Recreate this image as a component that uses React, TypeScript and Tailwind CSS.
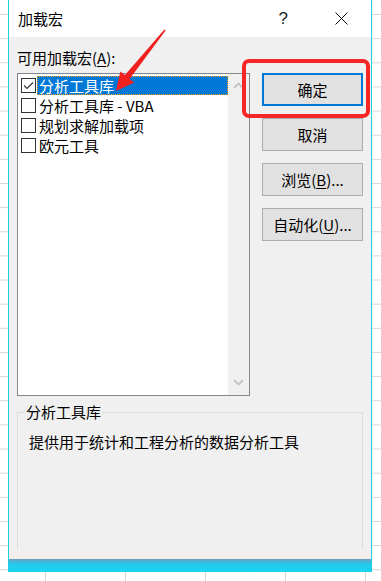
import React from 'react'

interface AddIn {
  id: string
  label: string
  checked: boolean
  selected?: boolean
}

const addIns: AddIn[] = [
  { id: 'atp', label: '分析工具库', checked: true, selected: true },
  { id: 'vba', label: '分析工具库 - VBA', checked: false },
  { id: 'solver', label: '规划求解加载项', checked: false },
  { id: 'euro', label: '欧元工具', checked: false },
]

function CheckBox({ checked }: { checked: boolean }) {
  return (
    <div className="flex h-[15px] w-[15px] shrink-0 items-center justify-center border border-[#333333] bg-white">
      {checked && (
        <svg width="13" height="13" viewBox="0 0 13 13">
          <path d="M2 6.5 L5 9.5 L11 3.5" fill="none" stroke="#333333" strokeWidth="1.1" />
        </svg>
      )}
    </div>
  )
}

function Chevron({ up }: { up?: boolean }) {
  return (
    <svg width="11" height="7" viewBox="0 0 11 7">
      <path
        d={up ? 'M1 6 L5.5 1.5 L10 6' : 'M1 1 L5.5 5.5 L10 1'}
        fill="none"
        stroke="#c4c4c4"
        strokeWidth="1.8"
      />
    </svg>
  )
}

function DialogButton({ children, primary }: { children: React.ReactNode; primary?: boolean }) {
  return (
    <button
      className={
        primary
          ? 'flex h-[33px] w-full items-center justify-center border-2 border-[#0078d7] bg-[#e1e1e1] text-[15px] leading-[20px]'
          : 'flex h-[33px] w-full items-center justify-center border border-[#adadad] bg-[#e1e1e1] text-[15px] leading-[20px]'
      }
    >
      {children}
    </button>
  )
}

export default function App() {
  return (
    <div className="relative h-[581px] w-[381px] overflow-hidden bg-white bg-[linear-gradient(#d6d6d6_1px,transparent_1px),linear-gradient(90deg,#d6d6d6_1px,transparent_1px)] bg-[size:80px_24.15px] bg-[position:45px_14px] font-['Noto_Sans_CJK_SC',sans-serif] text-black">
      {/* Dialog */}
      <div className="ml-[8px] flex h-[572px] w-[364px] flex-col border-x border-[#1fcfe2]">
        {/* Title bar */}
        <div className="flex h-[37px] shrink-0 items-center bg-white pl-[9px] pr-[23px]">
          <span className="text-[15px] leading-[20px]">加载宏</span>
          <span className="ml-auto font-['Liberation_Sans',sans-serif] text-[17px] leading-[20px] text-[#222]">?</span>
          <svg className="ml-[47px]" width="13" height="13" viewBox="0 0 13 13">
            <path d="M0.5 0.5 L12.5 12.5 M12.5 0.5 L0.5 12.5" stroke="#111" strokeWidth="1" />
          </svg>
        </div>

        {/* Body */}
        <div className="flex flex-1 flex-col bg-[#f0f0f0] px-[8px] pt-[11px]">
          <div className="text-[15px] leading-[20px]">
            可用加载宏(<span className="underline underline-offset-2">A</span>):
          </div>

          <div className="mt-[5px] flex gap-[12px]">
            {/* List box */}
            <div className="flex h-[323px] w-[233px] shrink-0 border border-[#828790] bg-white">
              <ul className="flex flex-1 flex-col pt-[1px]">
                {addIns.map((item) => (
                  <li key={item.id} className="flex h-[20px] items-center pl-[3px]">
                    <CheckBox checked={item.checked} />
                    <span
                      className={
                        item.selected
                          ? 'ml-[1px] flex h-[19px] flex-1 items-center border border-dotted border-[#ff9d00] bg-[#0078d7] pl-[1px] text-[15px] leading-[19px] text-white'
                          : 'ml-[1px] flex h-[19px] flex-1 items-center pl-[2px] text-[15px] leading-[19px]'
                      }
                    >
                      {item.label}
                    </span>
                  </li>
                ))}
              </ul>
              <div className="flex w-[21px] shrink-0 flex-col items-center justify-between bg-[#f0f0f0] pb-[9px] pt-[8px]">
                <Chevron up />
                <Chevron />
              </div>
            </div>

            {/* Buttons */}
            <div className="flex w-[101px] flex-col gap-[12px]">
              <DialogButton primary>确定</DialogButton>
              <DialogButton>取消</DialogButton>
              <DialogButton>
                浏览(<span className="underline underline-offset-2">B</span>)...
              </DialogButton>
              <DialogButton>
                自动化(<span className="underline underline-offset-2">U</span>)...
              </DialogButton>
            </div>
          </div>

          {/* Description group */}
          <fieldset className="mt-[6px] w-[346px] flex-1 border border-b-0 border-[#dcdcdc] px-[7px]">
            <legend className="px-[1px] text-[15px] leading-[20px]">分析工具库</legend>
            <p className="mt-[10px] pl-[4px] text-[15px] leading-[20px]">提供用于统计和工程分析的数据分析工具</p>
          </fieldset>
        </div>

        {/* Blurred bottom edge */}
        <div className="h-[10px] shrink-0 bg-[linear-gradient(to_bottom,#f0f0f0,#f6ece9)]" />
        <div className="h-[13px] shrink-0 bg-[linear-gradient(to_bottom,#6c9ec4,#2ac6e8_35%,#14d8f5)]" />
      </div>

      {/* Annotation: red box */}
      <div className="absolute left-[242px] top-[59px] h-[59px] w-[128px] rounded-[7px] border-[4px] border-[#f52626]" />

      {/* Annotation: red arrow */}
      <svg className="absolute left-0 top-0" width="381" height="581" viewBox="0 0 381 581">
        <polygon
          points="116,91 120.3,71.4 125,75.1 164.4,29.5 165.6,30.5 129.6,78.9 134.3,82.6"
          fill="#f0201f"
        />
      </svg>
    </div>
  )
}
